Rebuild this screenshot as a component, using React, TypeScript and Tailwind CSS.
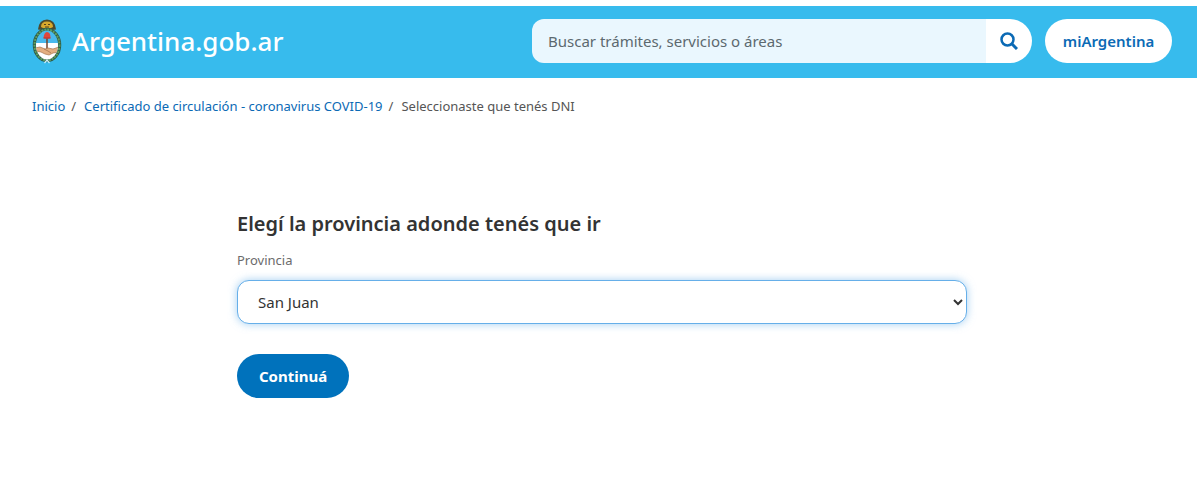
import { useState } from "react";

const provinces = [
  "Buenos Aires",
  "Catamarca",
  "Chaco",
  "Chubut",
  "Córdoba",
  "Corrientes",
  "Entre Ríos",
  "Formosa",
  "Jujuy",
  "La Pampa",
  "La Rioja",
  "Mendoza",
  "Misiones",
  "Neuquén",
  "Río Negro",
  "Salta",
  "San Juan",
  "San Luis",
  "Santa Cruz",
  "Santa Fe",
];

function CoatOfArms() {
  return (
    <svg viewBox="0 0 30 46" className="h-[46px] w-[30px]" aria-hidden="true">
      <defs>
        <clipPath id="shield">
          <ellipse cx="15" cy="27" rx="11" ry="14.5" />
        </clipPath>
      </defs>
      <path d="M6 11.500Q7 1.500 15 1.500Q23 1.500 24 11.500L20 12H10Z" fill="#4f4a2c" />
      <path d="M9 9Q9 3.500 15 3.500Q21 3.500 21 9Q18 11 15 11Q12 11 9 9Z" fill="#d9a92c" />
      <path d="M12 6.500h2m2 0h2M13 9h4" stroke="#5a431b" strokeWidth="1" />
      <ellipse cx="15" cy="27" rx="12.500" ry="15.500" fill="none" stroke="#2f5c4c" strokeWidth="3.500" />
      <ellipse cx="15" cy="27" rx="12.500" ry="15.500" fill="none" stroke="#5f9f5d" strokeWidth="2" strokeDasharray="2 1" />
      <g clipPath="url(#shield)">
        <rect x="4" y="12" width="22" height="14" fill="#49b9ec" />
        <rect x="4" y="25" width="22" height="17" fill="#fff" />
        <path d="M15 18v17" stroke="#70432c" strokeWidth="1.500" />
        <path d="M3 30l5-1 5 2 3-1 5 1 6-2v5l-6 1-4 2-4-1-4-2-6-1Z" fill="#e3ae80" stroke="#a7754e" strokeWidth=".7" />
        <path d="M12 31l4 2 3 2" fill="none" stroke="#a7754e" strokeWidth=".8" />
      </g>
      <path d="M11.500 20Q12 14.500 15 14Q18.500 14 18.500 20Q15 21.500 11.500 20Z" fill="#e0463c" />
      <path d="M11.500 20h7" stroke="#b53232" />
      <path d="M15 42l-2.500 3m2.500-3l2.500 3" stroke="#c9edfb" strokeWidth="1.200" />
    </svg>
  );
}

export default function App() {
  const [province, setProvince] = useState("San Juan");

  return (
    <div className="bg-white pt-1.5 font-['Noto_Sans',sans-serif] text-[#333]">
      <header className="bg-[#37bbed] pr-[25px] pl-8">
        <div className="flex h-[72px] items-center justify-between gap-4 pb-0.5">
          <a href="#inicio" className="flex items-center gap-2.5 text-[26px] leading-9 font-medium text-white">
            <CoatOfArms />
            Argentina.gob.ar
          </a>
          <div className="flex min-w-0 items-center gap-[13px]">
            <form className="flex h-11 w-[500px] min-w-0" onSubmit={(e) => e.preventDefault()}>
              <input
                type="search"
                aria-label="Buscar trámites, servicios o áreas"
                placeholder="Buscar trámites, servicios o áreas"
                className="min-w-0 flex-1 rounded-l-xl bg-[#eaf7fe] px-4 text-[15px] outline-none placeholder:text-[#5c696f]"
              />
              <button
                type="submit"
                aria-label="Buscar"
                className="flex w-[46px] items-center justify-center rounded-r-full bg-white text-[#0b6ab5]"
              >
                <svg viewBox="0 0 18 18" className="size-[18px]" fill="none" stroke="currentColor" aria-hidden="true">
                  <circle cx="7.500" cy="7.500" r="6" strokeWidth="2.500" />
                  <path d="M12 12l5 5" strokeWidth="3" />
                </svg>
              </button>
            </form>
            <a
              href="#mi-argentina"
              className="flex h-11 w-[127px] shrink-0 items-center justify-center rounded-full bg-white text-[15px] font-semibold text-[#0b6ab5]"
            >
              miArgentina
            </a>
          </div>
        </div>
      </header>

      <nav aria-label="Ruta de navegación" className="pt-[18px] pr-[25px] pl-8">
        <ol className="flex flex-wrap text-[13px] leading-5 text-[#555]">
          <li>
            <a href="#inicio" className="text-[#0b6ab5]">Inicio</a>
            <span className="pr-2 pl-1.5" aria-hidden="true">/</span>
          </li>
          <li>
            <a href="#certificado" className="text-[#0b6ab5]">Certificado de circulación - coronavirus COVID-19</a>
            <span className="pr-2 pl-1.5" aria-hidden="true">/</span>
          </li>
          <li aria-current="page">Seleccionaste que tenés DNI</li>
        </ol>
      </nav>

      <main className="pt-24 pr-[25px] pb-20 pl-8">
        <form className="mx-auto max-w-[730px]" onSubmit={(e) => e.preventDefault()}>
          <h1 className="text-xl leading-6 font-semibold">Elegí la provincia adonde tenés que ir</h1>
          <label htmlFor="province" className="mt-3.5 block text-[13px] leading-5 text-[#6b6b6b]">
            Provincia
          </label>
          <select
            id="province"
            value={province}
            onChange={(e) => setProvince(e.target.value)}
            className="mt-2.5 block h-11 w-full rounded-xl border border-[#66afe9] bg-white pl-4 text-[15px] shadow-[0_0_8px_rgba(102,175,233,0.6)] outline-none"
          >
            {provinces.map((name) => (
              <option key={name}>{name}</option>
            ))}
          </select>
          <button type="submit" className="mt-[30px] h-11 w-28 rounded-full bg-[#0072bc] text-[15px] font-bold text-white">
            Continuá
          </button>
        </form>
      </main>
    </div>
  );
}
